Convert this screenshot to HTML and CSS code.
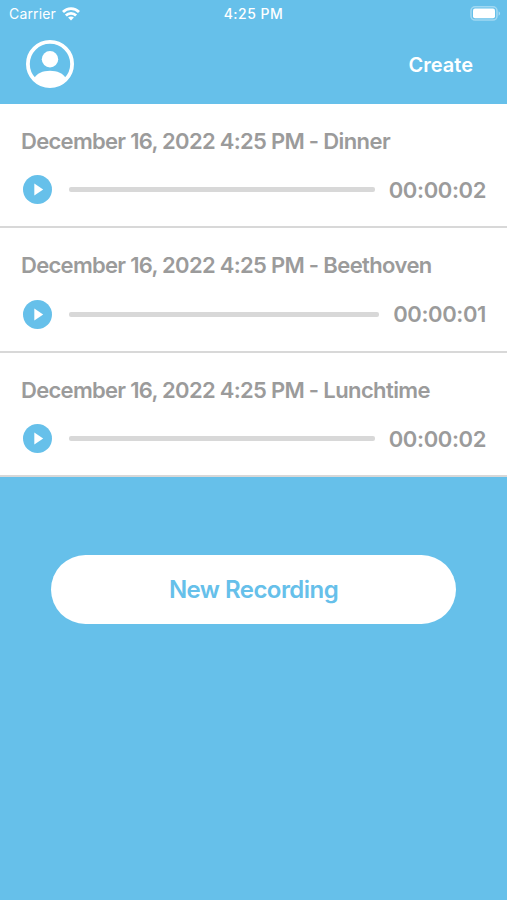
FILE: index.html
```html
<!DOCTYPE html>
<html lang="en">
<head>
  <meta charset="UTF-8">
  <meta name="viewport" content="width=device-width, initial-scale=1">
  <title>Recordings</title>
  <link rel="stylesheet" href="styles.css">
</head>
<body>
  <div class="status-bar">
    <div class="carrier">
      <span class="carrier-name">Carrier</span>
      <svg class="wifi" viewBox="0 0 18 14" width="18" height="14" fill="none" stroke="#fff" stroke-width="2.7">
        <path d="M1 5C5.3.4 12.7.4 17 5"/>
        <path d="M3.9 8.5C6.6 5.6 11.4 5.6 14.1 8.5"/>
        <path d="M9 13.6L6.1 10.6C7.6 9 10.4 9 11.9 10.6Z" fill="#fff" stroke="none"/>
      </svg>
    </div>
    <span class="clock">4:25 PM</span>
    <svg class="battery" viewBox="0 0 31 15" width="31" height="15">
      <rect x="1" y=".8" width="26" height="13.2" rx="4" fill="none" stroke="#fff" stroke-opacity=".38" stroke-width="1.6"/>
      <rect x="3" y="2.6" width="22" height="9.6" rx="2" fill="#fff"/>
      <path d="M28.6 5.3C30.6 6.1 30.6 8.9 28.6 9.7Z" fill="#fff" fill-opacity=".45"/>
    </svg>
  </div>

  <header class="header">
    <svg class="avatar" viewBox="0 0 48 48" width="48" height="48">
      <circle cx="24" cy="24" r="22.1" fill="none" stroke="#fff" stroke-width="3.8"/>
      <circle cx="24" cy="19.3" r="8.2" fill="#fff"/>
      <path d="M8 38.6C10.5 33.5 17 30.8 24 30.8S37.5 33.5 40 38.6C36 43.5 30.5 46.5 24 46.5S12 43.5 8 38.6Z" fill="#fff"/>
    </svg>
    <a href="#" class="create-link">Create</a>
  </header>

  <ul class="recordings">
    <li class="recording">
      <h2 class="title"><span class="date">December 16, 2022 4:25 PM -</span> Dinner</h2>
      <div class="player">
        <svg class="play" viewBox="0 0 29 29" width="29" height="29">
          <circle cx="14.5" cy="14.5" r="14.5" fill="#66c0ea"/>
          <path d="M11.3 8.4L20.2 14.5L11.3 20.6Z" fill="#fff"/>
        </svg>
        <div class="track"></div>
        <span class="time">00:00:02</span>
      </div>
    </li>
    <li class="recording">
      <h2 class="title"><span class="date">December 16, 2022 4:25 PM -</span> Beethoven</h2>
      <div class="player">
        <svg class="play" viewBox="0 0 29 29" width="29" height="29">
          <circle cx="14.5" cy="14.5" r="14.5" fill="#66c0ea"/>
          <path d="M11.3 8.4L20.2 14.5L11.3 20.6Z" fill="#fff"/>
        </svg>
        <div class="track"></div>
        <span class="time">00:00:01</span>
      </div>
    </li>
    <li class="recording">
      <h2 class="title"><span class="date">December 16, 2022 4:25 PM -</span> Lunchtime</h2>
      <div class="player">
        <svg class="play" viewBox="0 0 29 29" width="29" height="29">
          <circle cx="14.5" cy="14.5" r="14.5" fill="#66c0ea"/>
          <path d="M11.3 8.4L20.2 14.5L11.3 20.6Z" fill="#fff"/>
        </svg>
        <div class="track"></div>
        <span class="time">00:00:02</span>
      </div>
    </li>
  </ul>

  <button type="button" class="record-btn">New Recording</button>
</body>
</html>
```

FILE: styles.css
```css
* {
  margin: 0;
  padding: 0;
  box-sizing: border-box;
}

body {
  font-family: Inter, 'Liberation Sans', sans-serif;
  background: #66c0ea;
  min-height: 100vh;
  overflow: hidden;
}

.status-bar {
  display: grid;
  grid-template-columns: 1fr auto 1fr;
  align-items: center;
  height: 27px;
  padding: 0 7px 0 9px;
  color: #fff;
}

.carrier {
  display: flex;
  align-items: center;
  gap: 6px;
}

.carrier-name {
  font-size: 14px;
  letter-spacing: 0.15px;
}

.clock {
  margin-right: 2px;
  font-size: 14px;
  font-weight: 500;
  letter-spacing: 0.5px;
}

.battery {
  justify-self: end;
  margin-right: -1px;
}

.header {
  display: flex;
  align-items: center;
  justify-content: space-between;
  height: 76.5px;
  padding: 0 34px 2px 26px;
}

.create-link {
  padding-top: 1px;
  color: #fff;
  font-size: 20px;
  font-weight: 600;
  text-decoration: none;
}

.recordings {
  list-style: none;
}

.recording {
  height: 124.6px;
  padding: 23px 21px 0;
  background: #fff;
  border-bottom: 2px solid #d8d8d8;
}

.title {
  height: 28px;
  line-height: 28px;
  font-size: 22px;
  font-weight: 600;
  letter-spacing: -0.6px;
  color: #9b9b9b;
  white-space: nowrap;
}

.date {
  letter-spacing: -0.71px;
}

.player {
  display: flex;
  align-items: center;
  height: 30px;
  margin-top: 20px;
  padding-left: 2px;
}

.track {
  flex: 1;
  height: 5px;
  margin: 0 14px 0 17px;
  border-radius: 2px;
  background: #d8d8d8;
}

.time {
  font-size: 22px;
  font-weight: 600;
  letter-spacing: -0.38px;
  color: #9b9b9b;
}

.record-btn {
  display: block;
  width: 405px;
  height: 69px;
  margin: 78px auto 0;
  border: none;
  border-radius: 35px;
  background: #fff;
  color: #66c0ea;
  font-family: inherit;
  font-size: 24px;
  font-weight: 600;
  letter-spacing: -0.55px;
  cursor: pointer;
}
```
